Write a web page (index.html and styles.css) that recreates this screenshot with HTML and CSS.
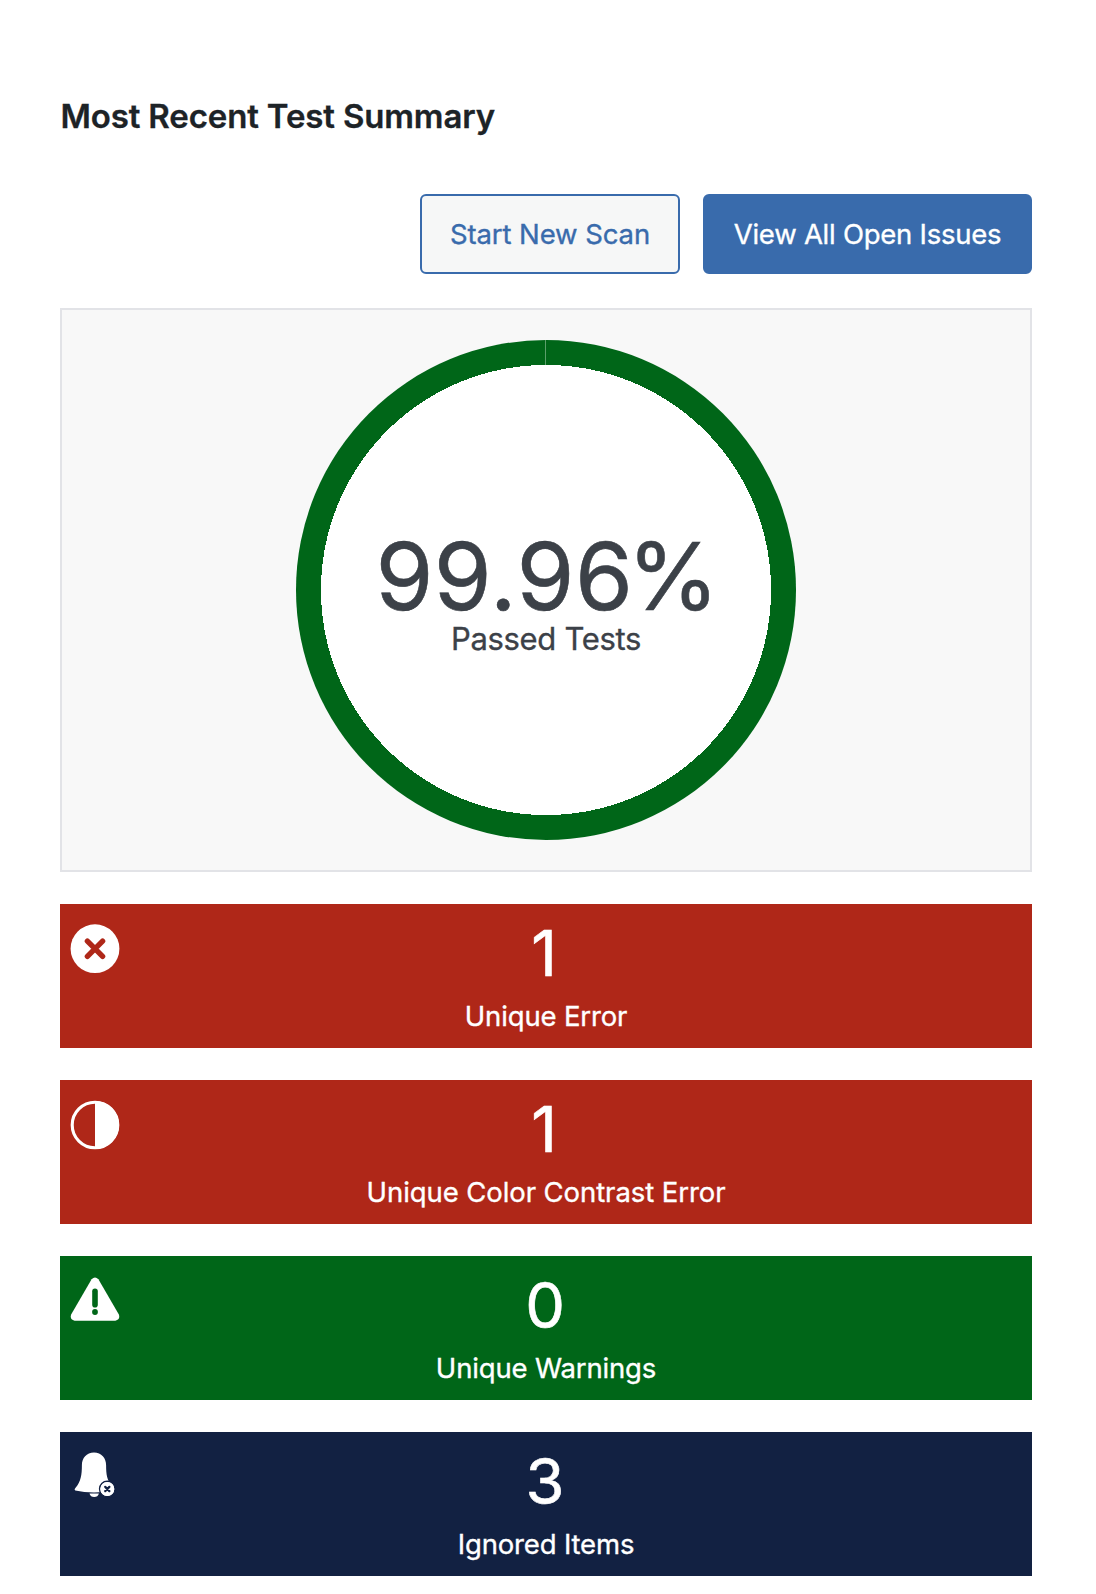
FILE: index.html
```html
<!DOCTYPE html>
<html lang="en">
<head>
<meta charset="utf-8">
<title>Most Recent Test Summary</title>
<link rel="stylesheet" href="styles.css">
</head>
<body>
<main class="summary">
  <h2 class="title">Most Recent Test Summary</h2>
  <div class="actions">
    <button class="btn btn-outline" type="button">Start New Scan</button>
    <button class="btn btn-solid" type="button">View All Open Issues</button>
  </div>
  <section class="panel">
    <div class="ring">
      <div class="percent">99.96<span class="sign">%</span></div>
      <div class="caption">Passed Tests</div>
    </div>
  </section>
  <section class="card error">
    <svg class="icon" viewBox="0 0 50 50" aria-hidden="true">
      <circle cx="25" cy="24.7" r="24.4" fill="#fff"/>
      <path d="M17.4 17.1l15.2 15.2M32.6 17.1L17.4 32.3" stroke="#af2718" stroke-width="5.4" stroke-linecap="round"/>
    </svg>
    <div class="count">1</div>
    <div class="label">Unique Error</div>
  </section>
  <section class="card error">
    <svg class="icon" viewBox="0 0 50 50" aria-hidden="true">
      <circle cx="25" cy="25" r="22.8" fill="none" stroke="#fff" stroke-width="3.1"/>
      <path d="M25 1a24 24 0 0 1 0 48z" fill="#fff"/>
    </svg>
    <div class="count">1</div>
    <div class="label contrast">Unique Color Contrast Error</div>
  </section>
  <section class="card pass">
    <svg class="icon" viewBox="0 0 50 50" aria-hidden="true">
      <path d="M21.6 3.3Q25 -0.1 28.4 3.3L48.7 38.2Q50.7 43.5 45.4 44.7H4.6Q-0.7 43.5 1.3 38.2z" fill="#fff"/>
      <path d="M25 15.2v13.6" stroke="#006618" stroke-width="5.6" stroke-linecap="round"/>
      <circle cx="25" cy="36" r="2.9" fill="#006618"/>
    </svg>
    <div class="count">0</div>
    <div class="label">Unique Warnings</div>
  </section>
  <section class="card ignored">
    <svg class="icon" viewBox="0 0 50 50" aria-hidden="true">
      <path d="M24 .4C31.5 .4 36.1 6 36.1 13C36.1 23 37 27.500 41.500 33.500Q44.500 37.500 43 38.300Q34 40.500 24 40.500T5.300 38.500C4.200 37.900 4.700 36.900 5.600 35.800C10.800 29.500 11.900 23 11.900 13C11.900 6 16.500 .4 24 .4z" fill="#fff"/>
      <path d="M19.500 41.600h9.400q-1 3.500-4.700 3.500t-4.700-3.500z" fill="#fff"/>
      <circle cx="37.300" cy="37" r="7.700" fill="#fff" stroke="#122142" stroke-width="1.500"/>
      <path d="M38 28.700h8v17h-8a8.400 8.400 0 0 0 0-17z" fill="#122142"/>
      <circle cx="37.300" cy="37" r="7" fill="#fff"/>
      <path d="M35.200 34.900l4.200 4.200M39.400 34.900l-4.200 4.200" stroke="#122142" stroke-width="2.2" stroke-linecap="round"/>
    </svg>
    <div class="count">3</div>
    <div class="label">Ignored Items</div>
  </section>
</main>
</body>
</html>
```
FILE: styles.css
```css
* { box-sizing: border-box; }

body {
  margin: 0;
  background: #fff;
  color: #1d2327;
  font-family: Inter, "Liberation Sans", sans-serif;
}

.summary {
  display: flex;
  flex-direction: column;
  padding: 96px 64px 18px 60px;
}

.title {
  margin: 0;
  font-size: 33px;
  font-weight: 600;
  line-height: 40px;
  letter-spacing: -0.15px;
  text-indent: 0.5px;
  -webkit-text-stroke: 0.3px;
}

.actions {
  display: flex;
  justify-content: flex-end;
  gap: 23px;
  margin-top: 58px;
}

.btn {
  height: 80px;
  padding: 0;
  border: 2px solid #396bac;
  border-radius: 6px;
  font-family: inherit;
  font-size: 27.5px;
  line-height: 40px;
  -webkit-text-stroke: 0.35px;
}

.btn-outline {
  width: 260px;
  background: #f6f7f7;
  color: #396bac;
  letter-spacing: -0.1px;
}

.btn-solid {
  width: 329px;
  background: #396bac;
  color: #fff;
  letter-spacing: -0.25px;
}

.panel {
  display: flex;
  justify-content: center;
  margin-top: 34px;
  padding: 30px 0;
  border: 2px solid #e2e3e7;
  background: #f8f8f8;
}

.ring {
  width: 500px;
  height: 500px;
  padding-top: 189px;
  border-radius: 50%;
  background:
    radial-gradient(closest-side, #fff 90%, transparent 90%),
    conic-gradient(#006618 99.96%, #5c9f6b 0);
  color: #3c4148;
  text-align: center;
}

.percent {
  font-size: 93.5px;
  line-height: 95px;
  letter-spacing: 0.4px;
  text-indent: 3px;
  -webkit-text-stroke: 0.6px;
}

.sign { margin-left: -6px; }

.caption {
  margin-top: -1px;
  font-size: 31px;
  line-height: 32px;
  letter-spacing: -0.32px;
  -webkit-text-stroke: 0.35px;
}

.card {
  position: relative;
  height: 144px;
  margin-top: 32px;
  padding-top: 17px;
  color: #fff;
  text-align: center;
}

.error { background: #af2718; }
.pass { background: #006618; }
.ignored { background: #122142; }

.icon {
  position: absolute;
  top: 20px;
  left: 10px;
  width: 50px;
  height: 50px;
}

.count {
  font-size: 63px;
  line-height: 64px;
  text-indent: -2px;
  -webkit-text-stroke: 0.6px;
}

.error .count { text-indent: -4px; }

.label {
  margin-top: 11px;
  font-size: 27.5px;
  line-height: 40px;
  letter-spacing: -0.16px;
  -webkit-text-stroke: 0.35px;
}

.contrast { letter-spacing: -0.08px; }
```
